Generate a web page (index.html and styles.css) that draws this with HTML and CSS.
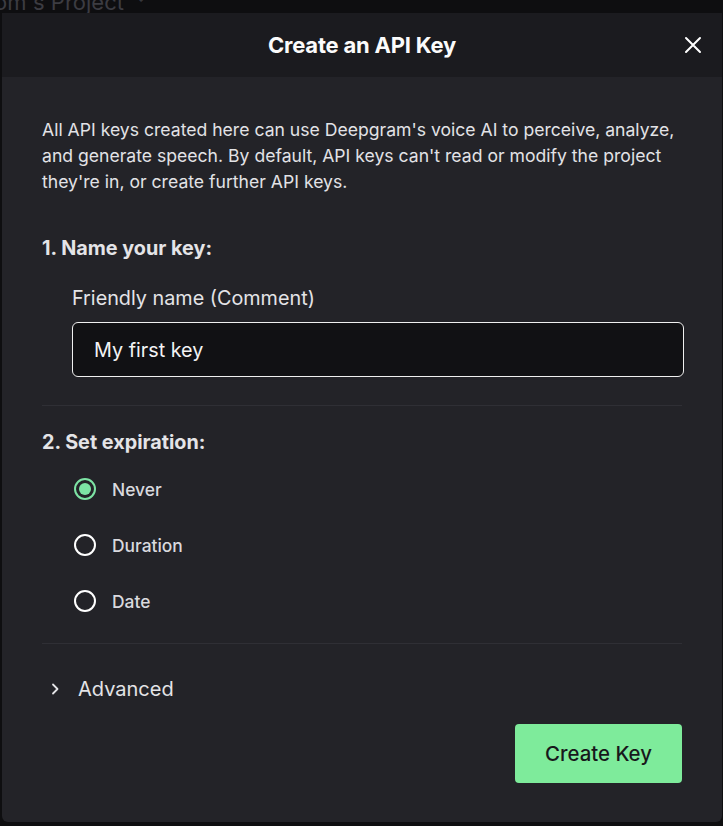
FILE: index.html
```html
<!DOCTYPE html>
<html>
<head>
<meta charset="utf-8">
<link rel="stylesheet" href="styles.css">
</head>
<body>
<div class="backdrop">
  <div class="bg-top"><span class="proj">om's Project</span><span class="proj-caret">&#8964;</span></div>
  <div class="modal">
    <div class="modal-header">
      <h2 class="title">Create an API Key</h2>
      <button class="close" aria-label="Close">
        <svg width="20" height="20" viewBox="0 0 20 20"><path d="M3 3L17 17M17 3L3 17" stroke="#fff" stroke-width="2" stroke-linecap="round"/></svg>
      </button>
    </div>
    <div class="modal-body">
      <p class="intro">All API keys created here can use Deepgram's voice AI to perceive, analyze, and generate speech. By default, API keys can't read or modify the project they're in, or create further API keys.</p>
      <h3 class="step first">1. Name your key:</h3>
      <div class="field">
        <label class="field-label">Friendly name (Comment)</label>
        <div class="input">My first key</div>
      </div>
      <hr class="divider">
      <h3 class="step">2. Set expiration:</h3>
      <div class="radios">
        <div class="radio-row"><span class="radio checked"></span><span class="radio-label">Never</span></div>
        <div class="radio-row"><span class="radio"></span><span class="radio-label">Duration</span></div>
        <div class="radio-row"><span class="radio"></span><span class="radio-label">Date</span></div>
      </div>
      <hr class="divider">
      <div class="advanced">
        <svg width="12" height="14" viewBox="0 0 12 14"><path d="M4 2.5L8.5 7L4 11.5" fill="none" stroke="#e4e4e7" stroke-width="1.8" stroke-linecap="round" stroke-linejoin="round"/></svg>
        <span>Advanced</span>
      </div>
      <div class="actions">
        <button class="primary">Create Key</button>
      </div>
    </div>
  </div>
</div>
</body>
</html>
```

FILE: styles.css
```css
* { box-sizing: border-box; }
html, body { margin: 0; padding: 0; }
body {
  background: #0e0e10;
  font-family: Inter, "Noto Sans", sans-serif;
  color: #e4e4e7;
  width: 723px;
  height: 826px;
  overflow: hidden;
}
.backdrop { height: 826px; }
.bg-top {
  overflow: hidden;
  color: #3c3c42;
  font-size: 22px;
  line-height: 22px;
  margin-left: -6px;
  display: flex;
  align-items: flex-start;
  gap: 12px;
  margin-top: -9px;
  height: 22px;
  margin-bottom: -13px;
}
.proj-caret { font-size: 13px; line-height: 12px; }
.modal {
  position: relative;
  margin-left: 2px;
  margin-top: 13px;
  width: 720px;
  height: 809px;
  background: #232328;
  border-radius: 0 0 6px 6px;
  display: flex;
  flex-direction: column;
}
.modal-header {
  height: 64px;
  background: #1b1b1f;
  display: flex;
  align-items: center;
  justify-content: center;
  position: relative;
}
.title {
  margin: 0;
  font-size: 22px;
  font-weight: 700;
  color: #fbfbfb;
  letter-spacing: -0.2px;
}
.close {
  position: absolute;
  right: 19px;
  top: 22px;
  background: none;
  border: 0;
  padding: 0;
  width: 20px;
  height: 20px;
  display: flex;
}
.modal-body {
  padding: 40px 40px 0 40px;
  display: flex;
  flex-direction: column;
}
.intro {
  margin: 0;
  font-size: 17.6px;
  line-height: 26px;
  color: #e2e2e6;
}
.step {
  margin: 0;
  font-size: 19.8px;
  font-weight: 700;
  color: #e4e4e7;
  line-height: 26px;
}
.step.first { margin-top: 40px; }
.field {
  padding-left: 30px;
  margin-top: 24px;
  display: flex;
  flex-direction: column;
}
.field-label {
  font-size: 19.8px;
  line-height: 26px;
  color: #e4e4e7;
}
.input {
  margin-top: 11px;
  width: 612px;
  height: 55px;
  border: 1px solid #f0f0f0;
  border-radius: 6px;
  background: #111114;
  color: #f3f3f5;
  font-size: 19.8px;
  display: flex;
  align-items: center;
  padding-left: 21px;
}
.divider {
  border: 0;
  border-top: 1px solid #2f2f35;
  margin: 28px 0 0 0;
  width: 640px;
}
.divider + .step { margin-top: 23px; }
.radios {
  padding-left: 32px;
  margin-top: 20px;
  display: flex;
  flex-direction: column;
  gap: 28px;
}
.radio-row {
  display: flex;
  align-items: center;
  height: 28px;
  gap: 16px;
}
.radio {
  width: 22px;
  height: 22px;
  border: 2px solid #ffffff;
  border-radius: 50%;
  display: flex;
  align-items: center;
  justify-content: center;
}
.radio.checked { border-color: #7de3a4; }
.radio.checked::after {
  content: "";
  width: 12px;
  height: 12px;
  border-radius: 50%;
  background: #7de3a4;
}
.radio-label {
  font-size: 17.4px;
  color: #d9d9de;
  font-weight: 500;
}
.radios + .divider { margin-top: 28px; }
.advanced {
  margin-top: 33px;
  display: flex;
  align-items: center;
  gap: 17px;
  padding-left: 7px;
  font-size: 20px;
  color: #e4e4e7;
}
.actions {
  display: flex;
  justify-content: flex-end;
  margin-top: 23px;
  width: 640px;
}
.primary {
  width: 167px;
  height: 59px;
  background: #7eeb9b;
  color: #18181b;
  border: 0;
  border-radius: 4px;
  font-family: Inter, "Noto Sans", sans-serif;
  font-size: 20.4px;
  font-weight: 500;
}
```
